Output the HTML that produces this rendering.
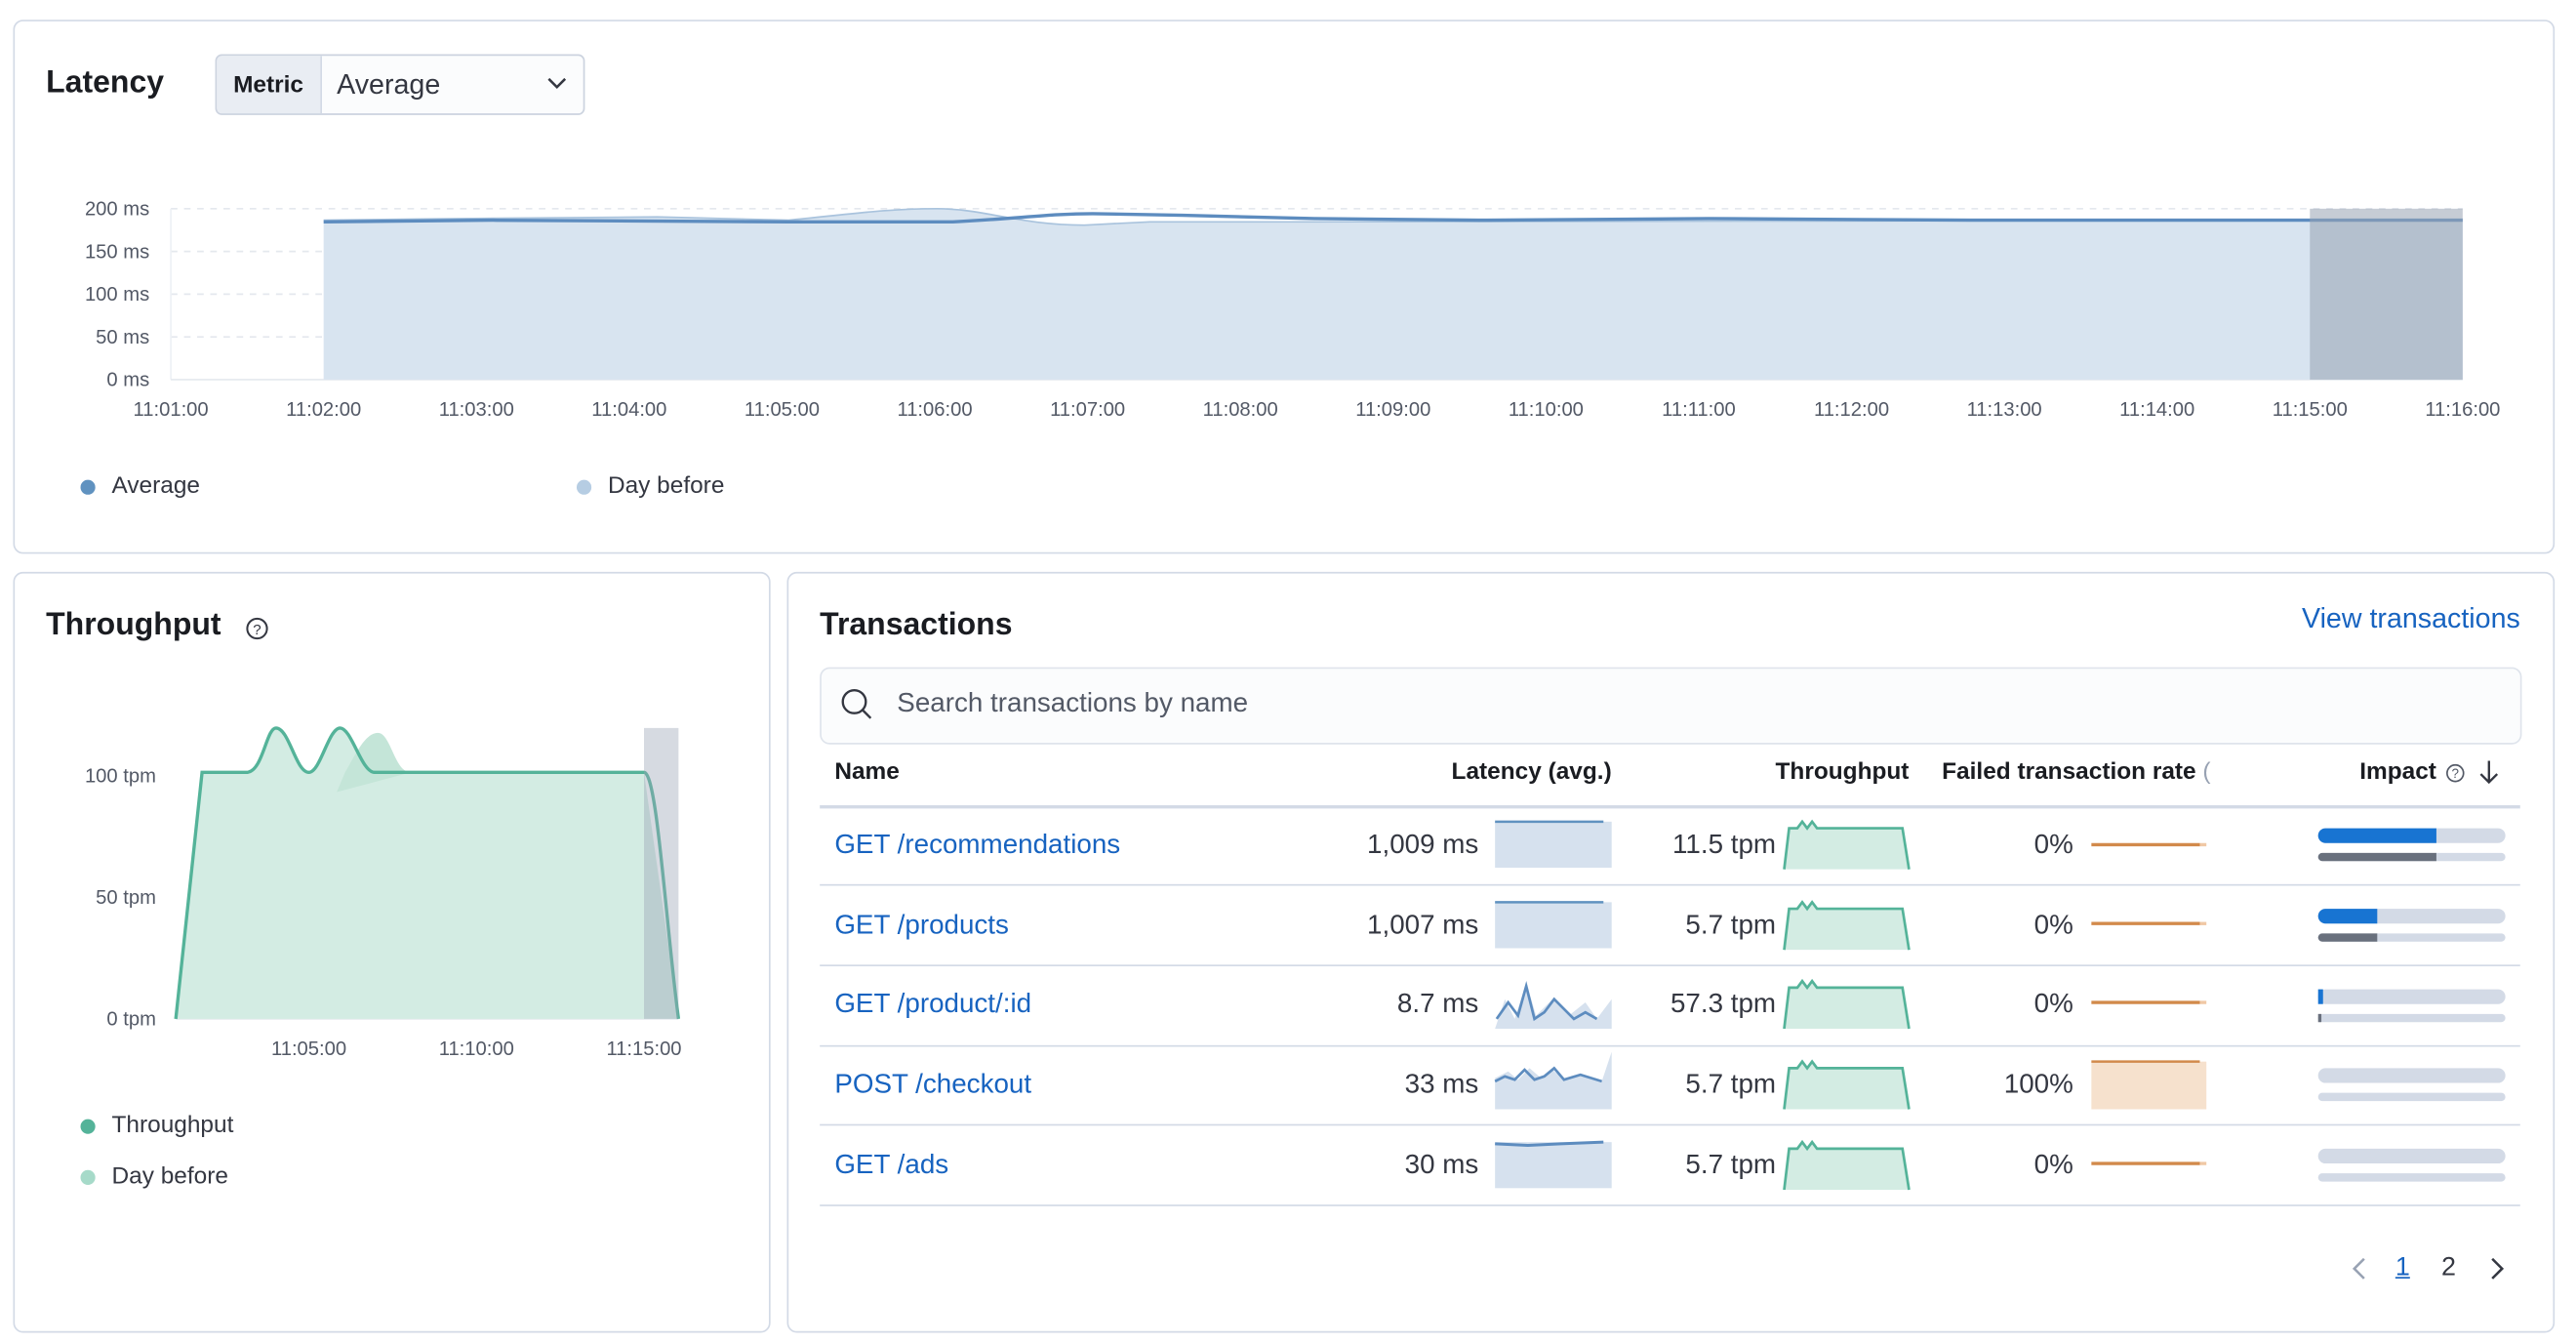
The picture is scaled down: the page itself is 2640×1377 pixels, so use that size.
<!DOCTYPE html>
<html><head><meta charset="utf-8"><style>
html,body{margin:0;padding:0;background:#fff;overflow:hidden}
body{width:2640px;height:1376px;font-family:"Liberation Sans",sans-serif;color:#1a1c21}
#w{position:absolute;left:0;top:0;width:1568px;height:818px;transform:scale(1.6837);transform-origin:0 0}
.a{position:absolute;white-space:nowrap}
.panel{position:absolute;border:1px solid #d3dae6;border-radius:6px;background:#fff}
.h{font-weight:bold;font-size:19px;line-height:20px}
.ax{font-size:12px;color:#535966;line-height:14px}
.lg{font-size:14.5px;line-height:16px;color:#343741}
.dot{position:absolute;width:9px;height:9px;border-radius:50%}
.th{font-size:14.5px;font-weight:bold;line-height:16px}
.td{font-size:16.5px;line-height:18px;color:#343741}
.lnk{font-size:16.5px;line-height:18px;color:#1763c0}
.hr{position:absolute;left:499px;width:1035px;height:1px;background:#d3dae6}
</style></head><body><div id="w">

<div class="panel" style="left:8px;top:12px;width:1545px;height:323px"></div>
<div class="a h" style="left:28px;top:41px">Latency</div>
<div class="a" style="left:131px;top:33px;width:223px;height:35px;border:1px solid #ccd3df;border-radius:4px;background:#fbfcfd;overflow:hidden">
 <div style="position:absolute;left:0;top:0;width:63px;height:35px;background:#e9edf3;border-right:1px solid #d3dae6"></div>
 <div class="a" style="left:10px;top:10px;font-size:14.5px;font-weight:bold;line-height:16px">Metric</div>
 <div class="a" style="left:73px;top:8px;font-size:17px;line-height:19px;color:#343741">Average</div>
 <svg class="a" style="left:200px;top:12px" width="14" height="10"><path d="M2 2 L7 7 L12 2" fill="none" stroke="#343741" stroke-width="1.5"/></svg>
</div>
<div class="a ax" style="left:40px;top:120px;width:51px;text-align:right">200 ms</div>
<div class="a ax" style="left:40px;top:146px;width:51px;text-align:right">150 ms</div>
<div class="a ax" style="left:40px;top:172px;width:51px;text-align:right">100 ms</div>
<div class="a ax" style="left:40px;top:198px;width:51px;text-align:right">50 ms</div>
<div class="a ax" style="left:40px;top:224px;width:51px;text-align:right">0 ms</div>
<svg class="a" style="left:0;top:0" width="1560" height="260">
 <g stroke="#e4e8ee" stroke-dasharray="4 4"><line x1="104" y1="127" x2="1499" y2="127"/><line x1="104" y1="153" x2="1499" y2="153"/><line x1="104" y1="179" x2="1499" y2="179"/><line x1="104" y1="205" x2="1499" y2="205"/></g>
 <line x1="104" y1="127" x2="104" y2="231" stroke="#eef1f5"/>
 <line x1="104" y1="231" x2="1499" y2="231" stroke="#e4e8ee"/>
 <path d="M197 134 L280 133 L400 132 L480 134 C520 130 540 127 570 127 C600 127 620 137 660 137 L700 135 L800 135 L1406 134 L1499 134 L1499 231 L197 231 Z" fill="#d8e4f0"/>
 <path d="M197 134 L280 133 L400 132 L480 134 C520 130 540 127 570 127 C600 127 620 137 660 137 L700 135 L800 135 L1406 134" fill="none" stroke="#a9c3dd" stroke-width="1"/>
 <path d="M197 135 L300 134 L480 135 L580 135 C620 133 640 130 665 130 L720 131 L800 133 L900 134 L1040 133 L1200 134 L1406 134 L1499 134" fill="none" stroke="#5d8cbf" stroke-width="2"/>
 <rect x="1406" y="127" width="93" height="104" fill="#98a2b3" opacity="0.55"/>
 <g font-size="12" fill="#535966" text-anchor="middle" font-family="Liberation Sans">
 <text x="104" y="253">11:01:00</text><text x="197" y="253">11:02:00</text><text x="290" y="253">11:03:00</text><text x="383" y="253">11:04:00</text><text x="476" y="253">11:05:00</text><text x="569" y="253">11:06:00</text><text x="662" y="253">11:07:00</text><text x="755" y="253">11:08:00</text><text x="848" y="253">11:09:00</text><text x="941" y="253">11:10:00</text><text x="1034" y="253">11:11:00</text><text x="1127" y="253">11:12:00</text><text x="1220" y="253">11:13:00</text><text x="1313" y="253">11:14:00</text><text x="1406" y="253">11:15:00</text><text x="1499" y="253">11:16:00</text></g>
</svg>
<div class="dot" style="left:49px;top:292px;background:#6092c0"></div>
<div class="a lg" style="left:68px;top:288px">Average</div>
<div class="dot" style="left:351px;top:292px;background:#b6cde3"></div>
<div class="a lg" style="left:370px;top:288px">Day before</div>

<div class="panel" style="left:8px;top:348px;width:459px;height:461px"></div>
<div class="a h" style="left:28px;top:371px">Throughput</div>
<svg class="a" style="left:149px;top:375px" width="15" height="15"><circle cx="7.5" cy="7.5" r="6" fill="none" stroke="#343741" stroke-width="1.2"/><text x="7.5" y="11" font-size="9" text-anchor="middle" fill="#343741" font-family="Liberation Sans">?</text></svg>
<div class="a ax" style="left:40px;top:465px;width:55px;text-align:right">100 tpm</div>
<div class="a ax" style="left:40px;top:539px;width:55px;text-align:right">50 tpm</div>
<div class="a ax" style="left:40px;top:613px;width:55px;text-align:right">0 tpm</div>
<svg class="a" style="left:0;top:0" width="470" height="650">
 <line x1="107" y1="620" x2="413" y2="620" stroke="#e4e8ee"/>
 <path d="M107 620 L123 470 L150 470 C160 470 162 443 168 443 C176 443 180 470 188 470 C195 470 200 443 207 443 C214 443 220 470 228 470 L392 470 L413 620 Z" fill="#d3ece3"/>
 <path d="M210 470 C216 460 222 446 230 446 C238 446 240 470 250 470 L205 482 Z" fill="#c4e5d8"/>
 <path d="M107 620 L123 470 L150 470 C160 470 162 443 168 443 C176 443 180 470 188 470 C195 470 200 443 207 443 C214 443 220 470 228 470 L392 470 C400 470 405 560 413 620" fill="none" stroke="#54b399" stroke-width="2"/>
 <rect x="392" y="443" width="21" height="177" fill="#98a2b3" opacity="0.4"/>
 <g font-size="12" fill="#535966" text-anchor="middle" font-family="Liberation Sans"><text x="188" y="642">11:05:00</text><text x="290" y="642">11:10:00</text><text x="392" y="642">11:15:00</text></g>
</svg>
<div class="dot" style="left:49px;top:681px;background:#54b399"></div>
<div class="a lg" style="left:68px;top:677px">Throughput</div>
<div class="dot" style="left:49px;top:712px;background:#a6dac9"></div>
<div class="a lg" style="left:68px;top:708px">Day before</div>

<div class="panel" style="left:479px;top:348px;width:1074px;height:461px"></div>
<div class="a h" style="left:499px;top:371px">Transactions</div>
<div class="a" style="left:1400px;top:367px;width:134px;text-align:right;font-size:17px;line-height:19px;color:#1763c0">View transactions</div>
<div class="a" style="left:499px;top:406px;width:1034px;height:45px;border:1px solid #dfe4ec;border-radius:6px;background:#fbfcfd"></div>
<svg class="a" style="left:511px;top:418px" width="22" height="22"><circle cx="9" cy="9" r="7" fill="none" stroke="#343741" stroke-width="1.4"/><line x1="14" y1="14" x2="19" y2="19" stroke="#343741" stroke-width="1.4"/></svg>
<div class="a" style="left:546px;top:419px;font-size:16.5px;line-height:19px;color:#535966">Search transactions by name</div>

<div class="a th" style="left:508px;top:462px">Name</div>
<div class="a th" style="left:860px;top:462px;width:121px;text-align:right">Latency (avg.)</div>
<div class="a th" style="left:1040px;top:462px;width:122px;text-align:right">Throughput</div>
<div class="a th" style="left:1182px;top:462px">Failed transaction rate <span style="font-weight:normal;color:#98a2b3">(</span></div>
<div class="a th" style="left:1400px;top:462px;width:83px;text-align:right">Impact</div>
<svg class="a" style="left:1488px;top:464px" width="13" height="13"><circle cx="6.5" cy="6.5" r="5" fill="none" stroke="#535966" stroke-width="1"/><text x="6.5" y="9.5" font-size="8" text-anchor="middle" fill="#535966" font-family="Liberation Sans">?</text></svg>
<svg class="a" style="left:1508px;top:461px" width="14" height="18"><path d="M7 2 V15 M2 10 L7 15 L12 10" fill="none" stroke="#343741" stroke-width="1.4"/></svg>
<div class="hr" style="top:490px;height:2px"></div>

<div class="a lnk" style="left:508px;top:505px">GET /recommendations</div>
<div class="a td" style="left:780px;top:505px;width:120px;text-align:right">1,009 ms</div>
<div class="a td" style="left:990px;top:505px;width:91px;text-align:right">11.5 tpm</div>
<div class="a td" style="left:1180px;top:505px;width:82px;text-align:right">0%</div>
<div class="hr" style="top:538px"></div>

<div class="a lnk" style="left:508px;top:554px">GET /products</div>
<div class="a td" style="left:780px;top:554px;width:120px;text-align:right">1,007 ms</div>
<div class="a td" style="left:990px;top:554px;width:91px;text-align:right">5.7 tpm</div>
<div class="a td" style="left:1180px;top:554px;width:82px;text-align:right">0%</div>
<div class="hr" style="top:587px"></div>

<div class="a lnk" style="left:508px;top:602px">GET /product/:id</div>
<div class="a td" style="left:780px;top:602px;width:120px;text-align:right">8.7 ms</div>
<div class="a td" style="left:990px;top:602px;width:91px;text-align:right">57.3 tpm</div>
<div class="a td" style="left:1180px;top:602px;width:82px;text-align:right">0%</div>
<div class="hr" style="top:636px"></div>

<div class="a lnk" style="left:508px;top:651px">POST /checkout</div>
<div class="a td" style="left:780px;top:651px;width:120px;text-align:right">33 ms</div>
<div class="a td" style="left:990px;top:651px;width:91px;text-align:right">5.7 tpm</div>
<div class="a td" style="left:1180px;top:651px;width:82px;text-align:right">100%</div>
<div class="hr" style="top:684px"></div>

<div class="a lnk" style="left:508px;top:700px">GET /ads</div>
<div class="a td" style="left:780px;top:700px;width:120px;text-align:right">30 ms</div>
<div class="a td" style="left:990px;top:700px;width:91px;text-align:right">5.7 tpm</div>
<div class="a td" style="left:1180px;top:700px;width:82px;text-align:right">0%</div>
<div class="hr" style="top:733px"></div>

<svg class="a" style="left:0;top:480px" width="1560" height="260">
 <defs>
  <g id="tp"><path d="M0 29 L3 4 L8 4 L11 0 L14 4 L17 0 L20 4 L72 4 L76 29 Z" fill="#d3ece3"/><path d="M0 29 L3 4 L8 4 L11 0 L14 4 L17 0 L20 4 L72 4 L76 29" fill="none" stroke="#54b399" stroke-width="1.6"/></g>
  <g id="fl"><line x1="0" y1="0" x2="66" y2="0" stroke="#d28a4b" stroke-width="2"/><line x1="66" y1="0" x2="70" y2="0" stroke="#f0c8a5" stroke-width="2"/></g>
 </defs>
 <rect x="910" y="20" width="71" height="28" fill="#d6e1ee"/><line x1="910" y1="20" x2="976" y2="20" stroke="#6092c0" stroke-width="1.5"/>
 <rect x="910" y="69" width="71" height="28" fill="#d6e1ee"/><line x1="910" y1="69" x2="976" y2="69" stroke="#6092c0" stroke-width="1.5"/>
 <path d="M910 146 L916 128 L922 140 L929 118 L935 138 L945 128 L955 138 L965 130 L972 140 L981 128 L981 146 Z" fill="#d6e1ee"/>
 <path d="M911 140 L918 130 L924 138 L929 120 L934 140 L940 136 L946 128 L954 136 L958 140 L965 136 L972 140" fill="none" stroke="#5d8cbf" stroke-width="1.6"/>
 <path d="M910 195 L910 176 L918 172 L924 177 L931 170 L938 176 L945 171 L952 177 L962 174 L975 178 L981 160 L981 195 Z" fill="#d6e1ee"/>
 <path d="M910 178 L916 175 L922 177 L928 171 L934 177 L940 175 L946 170 L952 177 L962 174 L975 178" fill="none" stroke="#5d8cbf" stroke-width="1.6"/>
 <rect x="910" y="215" width="71" height="28" fill="#d6e1ee"/><path d="M910 216 L930 217 L950 216 L976 215" fill="none" stroke="#5d8cbf" stroke-width="1.8"/>
 <use href="#tp" x="1086" y="20"/><use href="#tp" x="1086" y="69"/><use href="#tp" x="1086" y="117"/><use href="#tp" x="1086" y="166"/><use href="#tp" x="1086" y="215"/>
 <use href="#fl" x="1273" y="34"/><use href="#fl" x="1273" y="82"/><use href="#fl" x="1273" y="130"/>
 <rect x="1273" y="166" width="70" height="29" fill="#f6e1cd"/><line x1="1273" y1="166" x2="1339" y2="166" stroke="#d28a4b" stroke-width="1.5"/>
 <use href="#fl" x="1273" y="228"/>
 <g>
  <rect x="1411" y="24" width="114" height="9" rx="4.5" fill="#d3dae6"/><path d="M1415.5 24 H1483 V33 H1415.5 A4.5 4.5 0 0 1 1415.5 24 Z" fill="#1874d2"/>
  <rect x="1411" y="39" width="114" height="5" rx="2.5" fill="#d3dae6"/><path d="M1413.5 39 H1483 V44 H1413.5 A2.5 2.5 0 0 1 1413.5 39 Z" fill="#69707d"/>
  <rect x="1411" y="73" width="114" height="9" rx="4.5" fill="#d3dae6"/><path d="M1415.5 73 H1447 V82 H1415.5 A4.5 4.5 0 0 1 1415.5 73 Z" fill="#1874d2"/>
  <rect x="1411" y="88" width="114" height="5" rx="2.5" fill="#d3dae6"/><path d="M1413.5 88 H1447 V93 H1413.5 A2.5 2.5 0 0 1 1413.5 88 Z" fill="#69707d"/>
  <rect x="1411" y="122" width="114" height="9" rx="4.5" fill="#d3dae6"/><rect x="1411" y="122" width="3" height="9" fill="#1874d2"/>
  <rect x="1411" y="137" width="114" height="5" rx="2.5" fill="#d3dae6"/><rect x="1411" y="137" width="2" height="5" fill="#69707d"/>
  <rect x="1411" y="170" width="114" height="9" rx="4.5" fill="#d3dae6"/>
  <rect x="1411" y="185" width="114" height="5" rx="2.5" fill="#d3dae6"/>
  <rect x="1411" y="219" width="114" height="9" rx="4.5" fill="#d3dae6"/>
  <rect x="1411" y="234" width="114" height="5" rx="2.5" fill="#d3dae6"/>
 </g>
</svg>

<svg class="a" style="left:1430px;top:764px" width="12" height="16"><path d="M9 2 L3 8 L9 14" fill="none" stroke="#98a2b3" stroke-width="1.5"/></svg>
<div class="a" style="left:1458px;top:763px;font-size:16px;line-height:18px;color:#1763c0;text-decoration:underline">1</div>
<div class="a" style="left:1486px;top:763px;font-size:16px;line-height:18px;color:#343741">2</div>
<svg class="a" style="left:1514px;top:764px" width="12" height="16"><path d="M3 2 L9 8 L3 14" fill="none" stroke="#343741" stroke-width="1.5"/></svg>

</div></body></html>
